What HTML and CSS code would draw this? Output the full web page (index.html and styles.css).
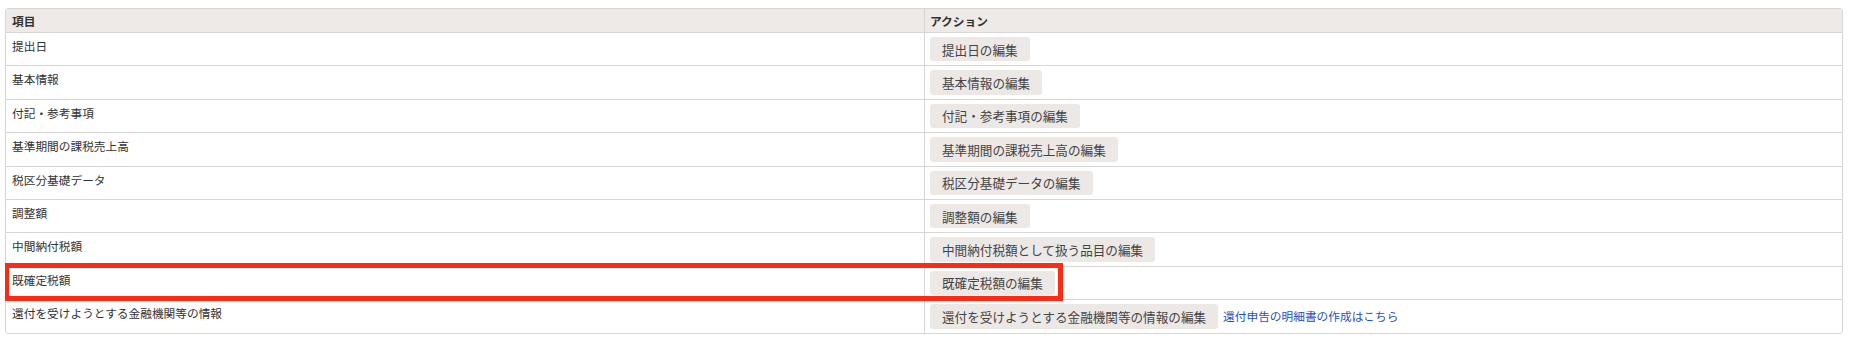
FILE: index.html
```html
<!DOCTYPE html>
<html>
<head>
    <title>申告書の編集</title>
    <link rel="stylesheet" href="styles.css">
</head>
<body>
    <div class="table-wrap">
        <table class="edit-table">
            <thead>
                <tr>
                    <th>項目</th>
                    <th>アクション</th>
                </tr>
            </thead>
            <tbody>
                <tr>
                    <td>提出日</td>
                    <td><button type="button" class="btn">提出日の編集</button></td>
                </tr>
                <tr>
                    <td>基本情報</td>
                    <td><button type="button" class="btn">基本情報の編集</button></td>
                </tr>
                <tr>
                    <td>付記・参考事項</td>
                    <td><button type="button" class="btn">付記・参考事項の編集</button></td>
                </tr>
                <tr>
                    <td>基準期間の課税売上高</td>
                    <td><button type="button" class="btn">基準期間の課税売上高の編集</button></td>
                </tr>
                <tr>
                    <td>税区分基礎データ</td>
                    <td><button type="button" class="btn">税区分基礎データの編集</button></td>
                </tr>
                <tr>
                    <td>調整額</td>
                    <td><button type="button" class="btn">調整額の編集</button></td>
                </tr>
                <tr>
                    <td>中間納付税額</td>
                    <td><button type="button" class="btn">中間納付税額として扱う品目の編集</button></td>
                </tr>
                <tr>
                    <td>既確定税額</td>
                    <td><button type="button" class="btn">既確定税額の編集</button></td>
                </tr>
                <tr>
                    <td>還付を受けようとする金融機関等の情報</td>
                    <td><button type="button" class="btn">還付を受けようとする金融機関等の情報の編集</button><a href="#" class="link">還付申告の明細書の作成はこちら</a></td>
                </tr>
            </tbody>
        </table>
        <!-- annotation box around the 既確定税額 row -->
        <div class="highlight"></div>
    </div>
</body>
</html>
```

FILE: styles.css
```css
body {
    font-family: "Noto Sans CJK JP", "Noto Sans", sans-serif;
    margin: 8px 8px 0 5px;
    color: #333;
    background: #fff;
}
.table-wrap {
    position: relative;
}
.edit-table {
    width: 100%;
    border-collapse: separate;
    border-spacing: 0;
    border: 1px solid #d6d6d6;
    border-radius: 3px;
    font-size: 11.7px;
}
.edit-table th,
.edit-table td {
    width: 50%;
    text-align: left;
    vertical-align: top;
    padding: 0 6px;
}
.edit-table th {
    background-color: #eeeae8;
    font-weight: bold;
    height: 23px;
    line-height: 23px;
}
.edit-table td {
    border-top: 1px solid #d6d6d6;
    padding-top: 4px;
    padding-bottom: 4px;
    line-height: 17px;
    height: 24.4px;
}
.edit-table th + th,
.edit-table td + td {
    border-left: 1px solid #d6d6d6;
    padding-left: 5px;
}
.btn {
    font-family: inherit;
    font-size: 12.6px;
    color: #444;
    background-color: #ece8e6;
    border: none;
    border-radius: 3px;
    height: 24.4px;
    padding: 0 12px;
    margin: 0;
    vertical-align: top;
    cursor: pointer;
}
.link {
    color: #1f4fc6;
    text-decoration: none;
    margin-left: 5px;
    line-height: 24.4px;
}
.highlight {
    position: absolute;
    left: -1px;
    top: 255px;
    width: 1059px;
    height: 38px;
    box-sizing: border-box;
    border: 5px solid #ff2a14;
}
```
